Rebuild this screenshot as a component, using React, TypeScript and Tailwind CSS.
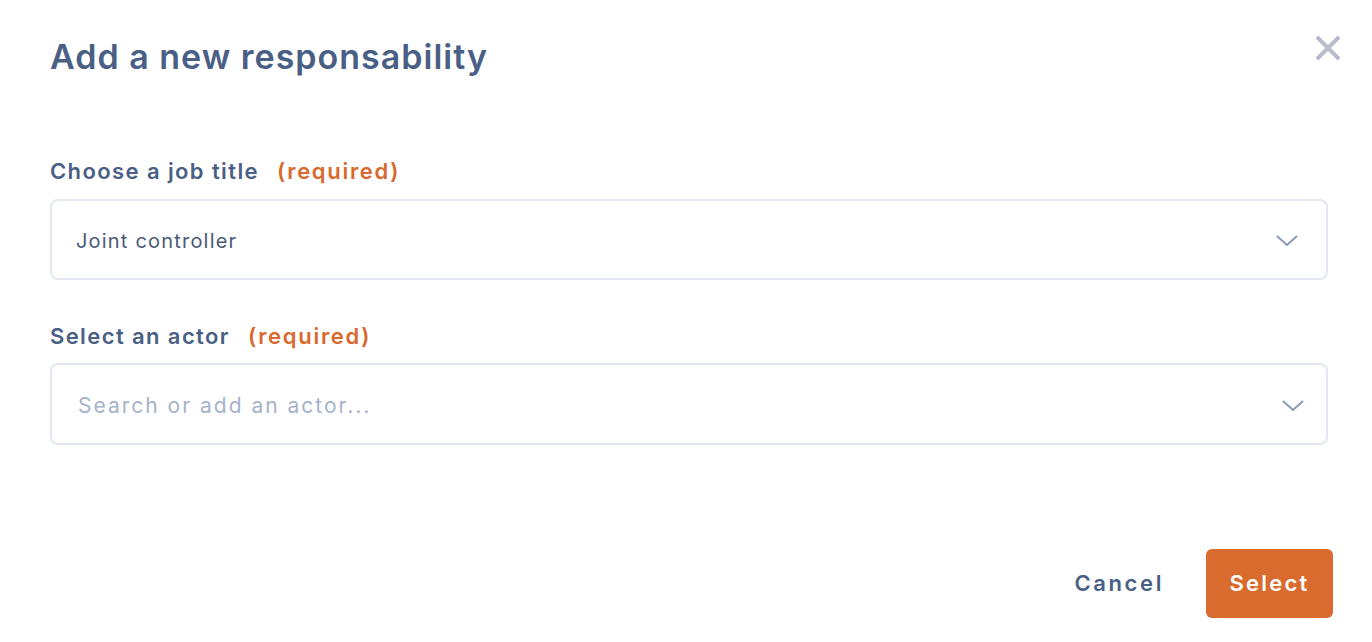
import React from "react";

const Chevron = ({ className }: { className?: string }) => (
  <svg className={className} width="22" height="12" viewBox="0 0 22 12" fill="none">
    <path d="M1.5 1.5 L11 10 L20.5 1.5" stroke="#8c9bb5" strokeWidth="2" strokeLinecap="round" strokeLinejoin="round" />
  </svg>
);

export default function App() {
  return (
    <div className="relative w-full h-[642px] bg-white font-['Inter',sans-serif] pl-[50px] pr-[44px]">
      <button className="absolute right-[31px] top-[35px] w-[26px] h-[26px]">
        <svg width="26" height="26" viewBox="0 0 26 26">
          <path d="M2 2 L24 24 M24 2 L2 24" stroke="#b8bdc9" strokeWidth="4" />
        </svg>
      </button>
      <h1 className="pt-[36px] text-[34px] leading-[42px] font-semibold text-[#4a5f85] tracking-[1px]">
        Add a new responsability
      </h1>

      <div className="mt-[79px] flex items-center h-[28px] text-[22px] font-semibold">
        <span className="text-[#4a5f85] tracking-[1.4px]">Choose a job title</span>
        <span className="ml-[18px] text-[#d9692e] tracking-[1.7px]">(required)</span>
      </div>
      <div className="mt-[14px] h-[81px] rounded-[8px] border-2 border-[#e4e8f2] flex items-center justify-between pl-[24px] pr-[28px] pt-[2px]">
        <span className="text-[20px] text-[#4a5a78] tracking-[1.2px]">Joint controller</span>
        <Chevron />
      </div>

      <div className="mt-[42px] flex items-center h-[28px] text-[22px] font-semibold">
        <span className="text-[#4a5f85] tracking-[1.4px]">Select an actor</span>
        <span className="ml-[18px] text-[#d9692e] tracking-[1.7px]">(required)</span>
      </div>
      <div className="mt-[13px] h-[82px] rounded-[8px] border-2 border-[#e4e8f2] flex items-center justify-between pl-[26px] pr-[22px] pt-[3px]">
        <span className="text-[21px] text-[#a5b3c9] tracking-[2px]">Search or add an actor...</span>
        <Chevron />
      </div>

      <div className="mt-[104px] flex justify-end items-center gap-[42px] -mr-[5px]">
        <button className="text-[22px] font-semibold text-[#4a5f85] tracking-[2.6px]">Cancel</button>
        <button className="h-[69px] w-[127px] rounded-[6px] bg-[#d96b2e] text-white text-[22px] font-semibold tracking-[2.2px]">
          Select
        </button>
      </div>
    </div>
  );
}
